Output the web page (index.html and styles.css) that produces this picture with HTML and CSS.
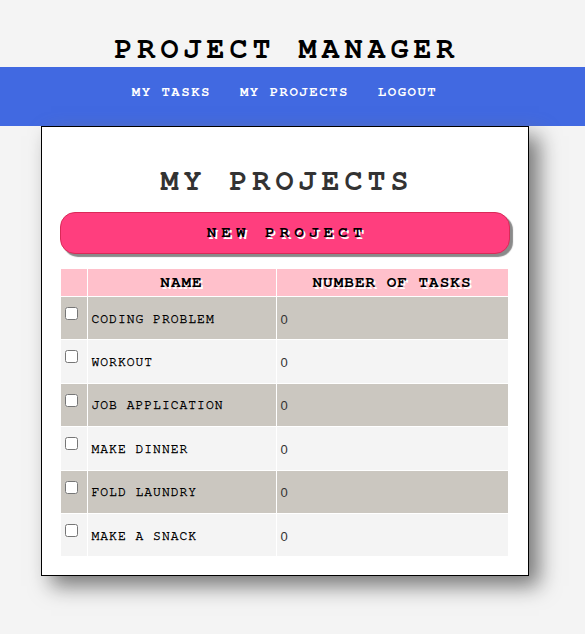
FILE: index.html
```html
<!DOCTYPE html>
<html lang="en">
<head>
<meta charset="utf-8">
<title>Project Manager</title>
<link rel="stylesheet" href="styles.css">
</head>
<body>
<header class="site-header">
  <h1 class="site-title">Project Manager</h1>
  <nav class="main-nav">
    <ul class="nav-list">
      <li><a class="nav-link" href="#">My Tasks</a></li>
      <li><a class="nav-link" href="#">My Projects</a></li>
      <li><a class="nav-link" href="#">Logout</a></li>
    </ul>
  </nav>
</header>
<main class="page">
  <section class="card">
    <h2 class="card-title">My Projects</h2>
    <button class="btn-new" type="button">New Project</button>
    <table class="projects">
      <colgroup>
        <col class="col-check">
        <col class="col-name">
        <col class="col-count">
      </colgroup>
      <thead>
        <tr><th></th><th>Name</th><th>Number of Tasks</th></tr>
      </thead>
      <tbody>
        <tr><td class="cell-check"><input type="checkbox" class="check"></td><td class="cell-name">Coding Problem</td><td class="cell-count">0</td></tr>
        <tr><td class="cell-check"><input type="checkbox" class="check"></td><td class="cell-name">Workout</td><td class="cell-count">0</td></tr>
        <tr><td class="cell-check"><input type="checkbox" class="check"></td><td class="cell-name">Job Application</td><td class="cell-count">0</td></tr>
        <tr><td class="cell-check"><input type="checkbox" class="check"></td><td class="cell-name">Make Dinner</td><td class="cell-count">0</td></tr>
        <tr><td class="cell-check"><input type="checkbox" class="check"></td><td class="cell-name">Fold Laundry</td><td class="cell-count">0</td></tr>
        <tr><td class="cell-check"><input type="checkbox" class="check"></td><td class="cell-name">Make a Snack</td><td class="cell-count">0</td></tr>
      </tbody>
    </table>
  </section>
</main>
</body>
</html>
```
FILE: styles.css
```css
html, body {
  margin: 0;
  padding: 0;
}
body {
  background: #f4f4f4;
  font-family: "Nimbus Mono PS", "Nimbus Mono L", "FreeMono", "Courier New", "Liberation Mono", monospace;
  color: #000;
}

.site-header {
  padding-top: 32px;
}
.site-title {
  margin: 0 0 1px;
  padding: 0 16px 0 0;
  text-align: center;
  font-size: 30px;
  line-height: 34px;
  letter-spacing: 5px;
  text-indent: 5px;
  font-weight: bold;
  text-transform: uppercase;
  color: #000;
}

.main-nav {
  background: #4169e1;
  height: 59px;
  box-sizing: border-box;
  padding: 16px 16px 0 0;
}
.nav-list {
  list-style: none;
  margin: 0;
  padding: 0;
  display: flex;
  justify-content: center;
  gap: 29px;
}
.nav-link {
  color: #fff;
  text-decoration: none;
  font-size: 14px;
  line-height: 16px;
  font-weight: bold;
  letter-spacing: 1.5px;
  text-transform: uppercase;
}

.page {
  padding-right: 16px;
}
.card {
  box-sizing: border-box;
  width: 488px;
  margin: 0 auto 60px;
  background: #fff;
  border: 1px solid #000;
  padding: 0 19px 18px;
  box-shadow: 10px 10px 20px #777;
}
.card-title {
  margin: 37px 0 14px;
  text-align: center;
  font-size: 30px;
  line-height: 34px;
  letter-spacing: 5px;
  text-indent: 5px;
  font-weight: bold;
  text-transform: uppercase;
  color: #333;
}

.btn-new {
  display: block;
  width: 100%;
  box-sizing: content-box;
  margin: 0 0 15px -1px;
  padding: 0 0 2px;
  height: 38px;
  border: 1px solid #d92a58;
  border-radius: 15px;
  background: #ff3e7e;
  box-shadow: 3px 3px 1px #8a8a8a;
  font-family: inherit;
  font-size: 16px;
  line-height: 37px;
  font-weight: bold;
  letter-spacing: 5px;
  text-indent: 5px;
  text-transform: uppercase;
  color: #000;
  text-shadow: 2px 2px 0 #fff;
}

.projects {
  width: 100%;
  table-layout: fixed;
  border-collapse: separate;
  border-spacing: 0;
}
.col-check { width: 27px; }
.col-name { width: 189px; }
.col-count { width: 232px; }

.projects th,
.projects td {
  border-right: 1px solid #fff;
  border-bottom: 1px solid #fff;
  padding: 0;
}
.projects th {
  background: #ffc0cb;
  height: 27px;
  padding: 4px 0 5px;
  box-sizing: border-box;
  font-size: 16px;
  line-height: 18px;
  font-weight: bold;
  letter-spacing: 1px;
  text-transform: uppercase;
  text-shadow: 2px 2px 0 #fff;
  text-align: center;
}
.projects tbody tr:nth-child(odd) td {
  background: #cbc7c0;
}
.projects tbody tr:nth-child(even) td {
  background: #f4f4f4;
}
.projects td {
  height: 42.4px;
  box-sizing: content-box;
}
.projects .cell-check {
  vertical-align: top;
}
.check {
  display: block;
  margin: 10px 0 0 4px;
}
.projects .cell-name {
  padding: 2px 4px 0 4px;
  height: 40.4px;
  font-size: 13px;
  letter-spacing: 1px;
  text-transform: uppercase;
  color: #000;
  -webkit-text-stroke: 0.35px #000;
  vertical-align: middle;
}
.projects .cell-count {
  padding: 2px 4px 0 4px;
  height: 40.4px;
  font-family: "Liberation Sans", Arial, sans-serif;
  font-size: 13px;
  color: #333;
  vertical-align: middle;
}
```
